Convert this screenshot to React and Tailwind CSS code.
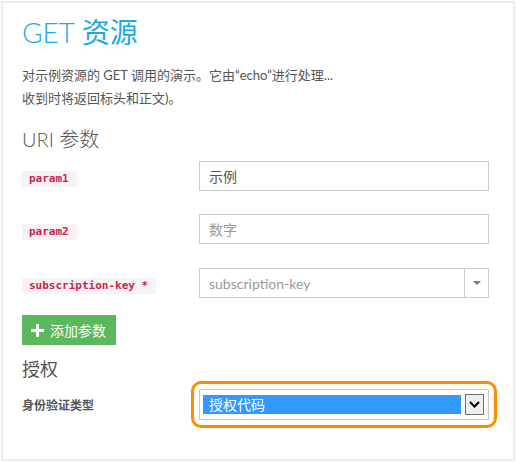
import React from "react";

const sans = { fontFamily: '"Lato", "Noto Sans CJK SC", sans-serif' };

const ParamLabel = ({ children }) => (
  <span className="inline-flex items-center h-[16px] pl-[7px] pr-[8px] bg-[#f9f2f4] text-[#c7254e] text-[11px] font-bold font-['DejaVu_Sans_Mono',monospace]">
    {children}
  </span>
);

const ParamRow = ({ label, value, placeholder, dropdown, className }) => (
  <div className={"flex items-center h-[30px] " + (className || "")}>
    <div className="w-[177px] shrink-0">
      <ParamLabel>{label}</ParamLabel>
    </div>
    <div className="flex w-[290px] h-[30px] border border-[#cccccc] bg-white">
      <div className={"flex-1 flex items-center px-[9px] text-[14px] " + (value ? "text-[#555555]" : "text-[#999999]")}>
        {value || placeholder}
      </div>
      {dropdown && (
        <div className="w-[24px] border-l border-[#cccccc] flex items-center justify-center">
          <div className="w-0 h-0 border-l-[4px] border-r-[4px] border-t-[4px] border-l-transparent border-r-transparent border-t-[#777777]" />
        </div>
      )}
    </div>
  </div>
);

export default function App() {
  return (
    <div className="pl-px pt-px bg-white" style={sans}>
      <div className="w-[514px] h-[460px] border-2 border-[#ececec] px-[19px] pt-[9px] flex flex-col">
        <h1 className="h-[40px] leading-[40px] text-[28px] font-light text-[#1ba9e6]">
          GET <span className="font-normal">资源</span>
        </h1>

        <p className="mt-[12px] text-[13px] leading-[23px] text-[#555555]">
          对示例资源的 GET 调用的演示。它由“echo”进行处理...
          <br />
          收到时将返回标头和正文)。
        </p>

        <h2 className="mt-[15px] h-[28px] leading-[28px] text-[20px] font-light text-[#555555]">URI 参数</h2>

        <ParamRow className="mt-[8px]" label="param1" value="示例" />
        <ParamRow className="mt-[23px]" label="param2" placeholder="数字" />
        <ParamRow className="mt-[24px]" label="subscription-key *" placeholder="subscription-key" dropdown />

        <div className="mt-[17px]">
          <button className="flex items-center h-[30px] w-[94px] bg-[#5cb85c] text-white text-[14px] pl-[9px]">
            <svg width="13" height="13" viewBox="0 0 13 13" className="mr-[6px]">
              <path d="M5 0h3v5h5v3H8v5H5V8H0V5h5z" fill="white" />
            </svg>
            添加参数
          </button>
        </div>

        <h2 className="mt-[13px] h-[23px] leading-[23px] text-[18px] text-[#555555]">授权</h2>

        <div className="flex items-center">
          <div className="w-[169px] shrink-0 pt-[3px] text-[12px] font-bold text-[#555555]">身份验证类型</div>
          <div className="w-[306px] h-[47px] border-[3px] border-[#ff8c00] rounded-[10px] p-[5px]">
            <div className="flex items-center w-[290px] h-[31px] border border-[#c8c8c8] bg-white pl-[3px]">
              <div className="flex items-center w-[258px] h-[19px] bg-[#3399ff] text-white text-[14px] pl-[6px]">
                授权代码
              </div>
              <div className="ml-[4px] w-[19px] h-[21px] border border-[#707070] bg-[#efefef] flex items-center justify-center">
                <svg width="11" height="7" viewBox="0 0 11 7">
                  <path d="M1 1l4.5 4.5L10 1" stroke="black" strokeWidth="2" fill="none" />
                </svg>
              </div>
            </div>
          </div>
        </div>
      </div>
    </div>
  );
}
